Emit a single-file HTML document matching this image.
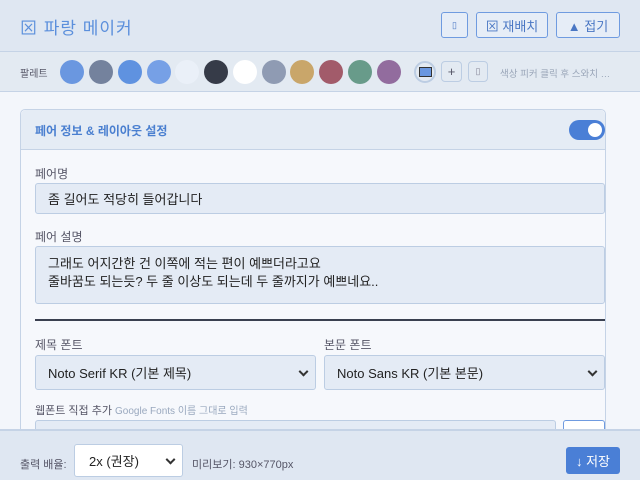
<!DOCTYPE html>
<html style="overflow:hidden;width:640px;height:480px"><head><meta charset="utf-8"><style>
*{box-sizing:border-box;margin:0;padding:0}
body{width:640px;height:480px;overflow:hidden;font-family:"Liberation Sans","Noto Sans CJK KR",sans-serif;background:#f3f6fb;position:relative;color:#333}
.a{position:absolute}
.hdr{left:0;top:0;width:640px;height:52px;background:#dfe7f2;border-bottom:1px solid #c5d3e6}
.pal{left:0;top:52px;width:640px;height:40px;background:#e3eaf2;border-bottom:1px solid #c5d3e6}
.btn{border:1px solid #6f9be0;border-radius:3px;background:#e6edf7;color:#4a77c4;font-size:13px;display:flex;align-items:center;justify-content:center}
.c{width:24px;height:24px;border-radius:50%;top:60px}
.lab{font-size:12px;color:#556}
.inp{background:#e4ebf5;border:1px solid #bccde3;border-radius:3px;font-size:13px;color:#222;padding-left:12px;display:flex;align-items:center}
.chev{position:absolute;right:8px;top:50%;width:7px;height:7px;border-right:2px solid #333;border-bottom:2px solid #333;transform:translateY(-70%) rotate(45deg)}
</style></head><body>
<div class="a hdr"></div>
<div class="a" style="left:20px;top:14px;font-size:17px;color:#5b8fdc;letter-spacing:1px">⊠ 파랑 메이커</div>
<div class="a btn" style="left:441px;top:12px;width:27px;height:26px;font-size:9px">▯</div>
<div class="a btn" style="left:476px;top:12px;width:72px;height:26px">⊠ 재배치</div>
<div class="a btn" style="left:556px;top:12px;width:64px;height:26px">▲ 접기</div>
<div class="a pal"></div>
<div class="a lab" style="left:20px;top:65px;font-size:10px">팔레트</div>
<div class="a c" style="left:60px;background:#6a97e0"></div>
<div class="a c" style="left:89px;background:#74829d"></div>
<div class="a c" style="left:118px;background:#5f92e0"></div>
<div class="a c" style="left:147px;background:#76a0e6"></div>
<div class="a c" style="left:175px;background:#eaf0f8"></div>
<div class="a c" style="left:204px;background:#363b48"></div>
<div class="a c" style="left:233px;background:#fff"></div>
<div class="a c" style="left:262px;background:#8f9bb3"></div>
<div class="a c" style="left:290px;background:#c9a66a"></div>
<div class="a c" style="left:319px;background:#a25b6a"></div>
<div class="a c" style="left:348px;background:#689b8a"></div>
<div class="a c" style="left:377px;background:#926c9e"></div>
<div class="a" style="left:414px;top:61px;width:22px;height:22px;border-radius:50%;border:2px solid #bccde3;display:flex;align-items:center;justify-content:center"><div style="width:13px;height:10px;background:#6a97e0;border:1px solid #333"></div></div>
<div class="a" style="left:441px;top:61px;width:21px;height:21px;border:1px solid #bccde3;border-radius:4px;text-align:center;font-size:13px;line-height:19px;color:#556">+</div>
<div class="a" style="left:468px;top:61px;width:20px;height:21px;border:1px solid #bccde3;border-radius:4px;text-align:center;font-size:9px;line-height:19px;color:#889">▯</div>
<div class="a" style="left:500px;top:66px;font-size:9.5px;color:#99a5b8">색상 피커 클릭 후 스와치 …</div>
<div class="a" style="left:20px;top:109px;width:586px;height:330px;border:1px solid #c5d3e6;border-radius:5px;background:#f6f8fc"></div>
<div class="a" style="left:21px;top:110px;width:584px;height:40px;background:#e5ecf5;border-bottom:1px solid #c5d3e6;border-radius:5px 5px 0 0"></div>
<div class="a" style="left:35px;top:122px;font-size:12px;font-weight:bold;color:#4a7fd0">페어 정보 &amp; 레이아웃 설정</div>
<div class="a" style="left:569px;top:120px;width:36px;height:20px;border-radius:10px;background:#4a7fd6"><div style="position:absolute;right:3px;top:3px;width:14px;height:14px;border-radius:50%;background:#fff"></div></div>
<div class="a lab" style="left:35px;top:165px">페어명</div>
<div class="a inp" style="left:35px;top:183px;width:570px;height:31px">좀 길어도 적당히 들어갑니다</div>
<div class="a lab" style="left:35px;top:228px">페어 설명</div>
<div class="a inp" style="left:35px;top:246px;width:570px;height:58px;display:block;padding-top:8px;line-height:18px">그래도 어지간한 건 이쪽에 적는 편이 예쁘더라고요<br>줄바꿈도 되는듯? 두 줄 이상도 되는데 두 줄까지가 예쁘네요..</div>
<div class="a" style="left:35px;top:319px;width:570px;height:2px;background:#3a4050"></div>
<div class="a lab" style="left:35px;top:336px">제목 폰트</div>
<div class="a lab" style="left:324px;top:336px">본문 폰트</div>
<div class="a inp" style="left:35px;top:355px;width:281px;height:35px">Noto Serif KR (기본 제목)<span class="chev"></span></div>
<div class="a inp" style="left:324px;top:355px;width:281px;height:35px">Noto Sans KR (기본 본문)<span class="chev"></span></div>
<div class="a lab" style="left:35px;top:402px;font-size:11px">웹폰트 직접 추가 <span style="color:#99a8be;font-size:10px">Google Fonts 이름 그대로 입력</span></div>
<div class="a inp" style="left:35px;top:420px;width:521px;height:19px;border-bottom:none"></div>
<div class="a" style="left:563px;top:420px;width:42px;height:19px;border:1px solid #6f9be0;border-bottom:none;border-radius:3px 3px 0 0;background:#fff"></div>
<div class="a" style="left:0;top:429px;width:640px;height:51px;background:#dfe7f2;border-top:2px solid #c5d3e6"></div>
<div class="a lab" style="left:20px;top:456px;font-size:11px">출력 배율:</div>
<div class="a inp" style="left:74px;top:444px;width:109px;height:33px;background:#fff;padding-left:14px">2x (권장)<span class="chev"></span></div>
<div class="a lab" style="left:192px;top:456px;font-size:11px">미리보기: 930×770px</div>
<div class="a" style="left:566px;top:447px;width:54px;height:27px;background:#4a7fd6;border-radius:3px;color:#fff;font-size:13px;display:flex;align-items:center;justify-content:center">↓ 저장</div>
</body></html>
